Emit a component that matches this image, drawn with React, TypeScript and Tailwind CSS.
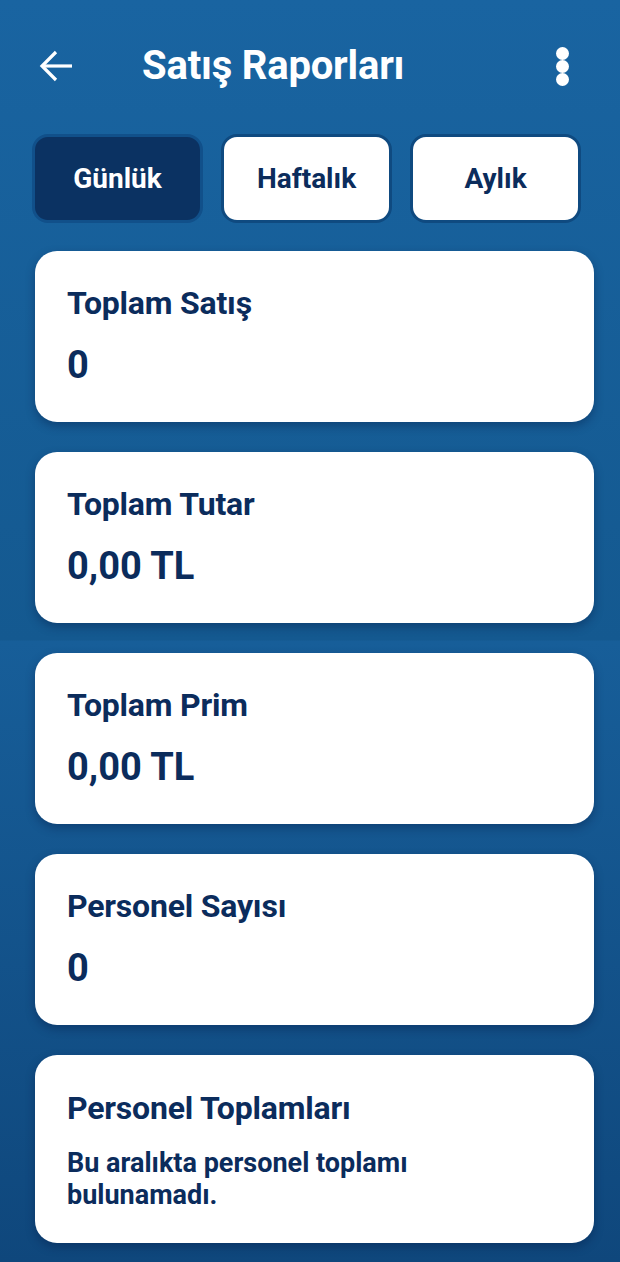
const font = { fontFamily: 'Roboto, "Noto Sans", sans-serif' }

const stats = [
  { label: 'Toplam Satış', value: '0' },
  { label: 'Toplam Tutar', value: '0,00 TL' },
  { label: 'Toplam Prim', value: '0,00 TL' },
  { label: 'Personel Sayısı', value: '0' },
]

const tabs = ['Günlük', 'Haftalık', 'Aylık']

export default function App() {
  return (
    <div
      style={font}
      className="min-h-[1262px] w-[620px] bg-[linear-gradient(180deg,#1964a1_0px,#145990_640px,#175e99_641px,#0f477c_1262px)] pb-[18px]"
    >
      {/* header */}
      <div className="flex items-center h-[128px] pt-[4px]">
        <button className="ml-[38px] w-[36px] h-[34px] flex items-center justify-center">
          <svg width="34" height="32" viewBox="0 0 34 32" fill="none" stroke="white" strokeWidth="3.2">
            <path d="M33 16H3" />
            <path d="M17 2 3 16l14 14" />
          </svg>
        </button>
        <h1 className="ml-[68px] text-white font-bold text-[40px] leading-[46px] tracking-[-0.2px]">
          Satış Raporları
        </h1>
        <div className="ml-auto mr-[51px] flex flex-col items-center">
          <span className="w-[13px] h-[13px] rounded-full bg-white" />
          <span className="w-[13px] h-[13px] rounded-full bg-white" />
          <span className="w-[13px] h-[13px] rounded-full bg-white" />
        </div>
      </div>

      {/* period tabs */}
      <div className="ml-[32px] w-[549px] grid grid-cols-3 gap-[18px] mt-[6px]">
        {tabs.map((t, i) => (
          <button
            key={t}
            className={`h-[89px] rounded-[16px] border-[3px] text-[28px] font-bold leading-none ${
              i === 0
                ? 'bg-[#0b3262] border-[#11508a] text-white'
                : 'bg-white border-[#0f4a80] text-[#0b2c5c]'
            }`}
          >
            {t}
          </button>
        ))}
      </div>

      {/* cards */}
      <div className="ml-[35px] w-[559px] mt-[28px] flex flex-col gap-[30px]">
        {stats.map((s) => (
          <div
            key={s.label}
            className="bg-white rounded-[22px] pl-[32px] pr-[24px] pt-[34px] pb-[36px] shadow-[0_4px_10px_rgba(0,20,60,0.35)] text-[#0b2c5c]"
          >
            <p className="font-bold text-[32px] leading-[36px] tracking-[-0.2px]">{s.label}</p>
            <p className="font-bold text-[38px] leading-[42px] mt-[23px]">{s.value}</p>
          </div>
        ))}
        <div className="bg-white rounded-[22px] pl-[32px] pr-[24px] pt-[35px] pb-[32px] shadow-[0_4px_10px_rgba(0,20,60,0.35)] text-[#0b2c5c]">
          <p className="font-bold text-[32px] leading-[36px] tracking-[-0.2px]">Personel Toplamları</p>
          <p className="font-bold text-[27px] leading-[32px] mt-[21px] w-[380px]">
            Bu aralıkta personel toplamı bulunamadı.
          </p>
        </div>
      </div>
    </div>
  )
}
